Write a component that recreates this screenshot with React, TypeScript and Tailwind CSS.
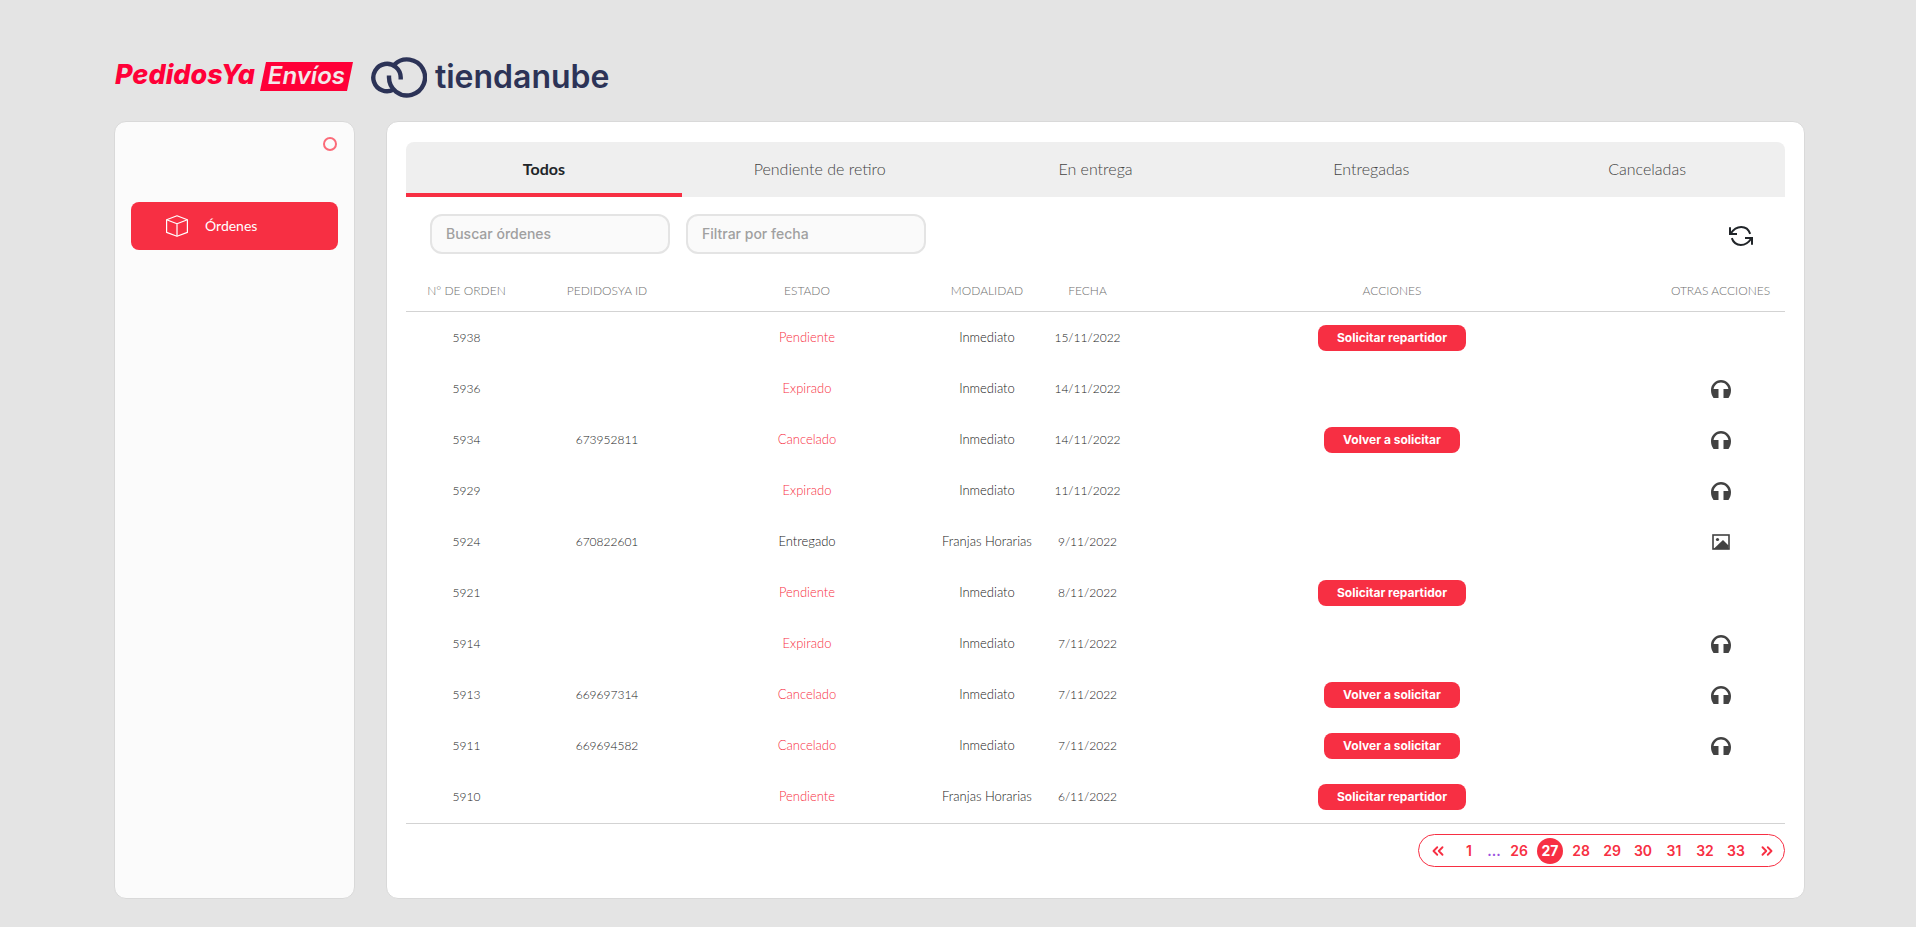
import { useState } from 'react'
import { ChevronsLeft, ChevronsRight } from 'lucide-react'

type Order = {
  id: string
  pedidosYaId?: string
  status: string
  mode: string
  date: string
  action?: string
  extra?: 'support' | 'image'
}

const TABS = ['Todos', 'Pendiente de retiro', 'En entrega', 'Entregadas', 'Canceladas']

const COLUMNS = [
  { label: 'N° DE ORDEN', width: 'w-[121px]' },
  { label: 'PEDIDOSYA ID', width: 'w-[160px]' },
  { label: 'ESTADO', width: 'w-[240px]' },
  { label: 'MODALIDAD', width: 'w-[120px]' },
  { label: 'FECHA', width: 'w-[81px]' },
  { label: 'ACCIONES', width: 'w-[528px]' },
  { label: 'OTRAS ACCIONES', width: 'w-[129px]' },
]

const ORDERS: Order[] = [
  { id: '5938', status: 'Pendiente', mode: 'Inmediato', date: '15/11/2022', action: 'Solicitar repartidor' },
  { id: '5936', status: 'Expirado', mode: 'Inmediato', date: '14/11/2022', extra: 'support' },
  { id: '5934', pedidosYaId: '673952811', status: 'Cancelado', mode: 'Inmediato', date: '14/11/2022', action: 'Volver a solicitar', extra: 'support' },
  { id: '5929', status: 'Expirado', mode: 'Inmediato', date: '11/11/2022', extra: 'support' },
  { id: '5924', pedidosYaId: '670822601', status: 'Entregado', mode: 'Franjas Horarias', date: '9/11/2022', extra: 'image' },
  { id: '5921', status: 'Pendiente', mode: 'Inmediato', date: '8/11/2022', action: 'Solicitar repartidor' },
  { id: '5914', status: 'Expirado', mode: 'Inmediato', date: '7/11/2022', extra: 'support' },
  { id: '5913', pedidosYaId: '669697314', status: 'Cancelado', mode: 'Inmediato', date: '7/11/2022', action: 'Volver a solicitar', extra: 'support' },
  { id: '5911', pedidosYaId: '669694582', status: 'Cancelado', mode: 'Inmediato', date: '7/11/2022', action: 'Volver a solicitar', extra: 'support' },
  { id: '5910', status: 'Pendiente', mode: 'Franjas Horarias', date: '6/11/2022', action: 'Solicitar repartidor' },
]

const PAGES = [26, 27, 28, 29, 30, 31, 32, 33]

function CloudMark() {
  return (
    <svg viewBox="0 0 56 42" className="w-14 h-[42px]" fill="none" stroke="#2c3357" strokeWidth="4.4">
      <path d="M29.7 22.5V20.5A13.7 13.7 0 1 0 22.5 32.6" />
      <path d="M18 18.5V20.5A18 18 0 1 0 23.5 7.5" />
    </svg>
  )
}

function BoxIcon() {
  return (
    <svg viewBox="0 0 22 22" className="w-[22px] h-[22px]" fill="none" stroke="currentColor" strokeWidth="1.2" strokeLinejoin="round">
      <path d="M11 .8 21.4 4.8V17.4L11 21.2.6 17.4V4.8z" />
      <path d="M.6 4.8 11 8.8 21.4 4.8M11 8.8V21.2" />
    </svg>
  )
}

function RefreshIcon() {
  return (
    <svg viewBox="0 0 24 20" className="w-6 h-5" fill="none" stroke="currentColor" strokeWidth="2">
      <path d="M1 1.3V8H8" />
      <path d="M1.5 7.8C5 2.5 8.5 1 12.2 1 16.5 1 19.8 3.8 21.2 7.8" />
      <path d="M23 18.7V12H16" />
      <path d="M22.5 12.2C19 17.5 15.5 19 11.8 19 7.5 19 4.2 16.2 2.8 12.2" />
    </svg>
  )
}

function HeadphonesIcon() {
  return (
    <svg viewBox="0 0 20 18" className="w-5 h-[18px]" fill="currentColor">
      <path d="M10 0C4.5 0 0 4.5 0 10c0 3 .8 5.5 2.5 8H7.5V9H2.6C3.2 5.3 6 2.4 10 2.4S16.8 5.3 17.4 9H12.5v9h5C19.2 15.5 20 13 20 10 20 4.5 15.5 0 10 0z" />
    </svg>
  )
}

function ImageIcon() {
  return (
    <svg viewBox="0 0 18 16" className="w-[18px] h-4">
      <rect x="1" y="1" width="16" height="14" fill="none" stroke="currentColor" strokeWidth="1.6" />
      <circle cx="5.5" cy="5.5" r="1.6" fill="currentColor" />
      <path d="M1.5 15 11 6 16.5 11.5V15z" fill="currentColor" />
    </svg>
  )
}

export default function App() {
  const [tab, setTab] = useState('Todos')
  const [page, setPage] = useState(27)

  return (
    <div className="min-h-screen bg-[#e4e4e4] pl-[114px] pr-[111px] pt-[57px] pb-7 font-['Lato',sans-serif] text-[#212529] flex flex-col">
      <header className="flex items-start gap-[18px] h-16 pl-px font-['Inter',sans-serif]">
        <div className="flex items-center gap-[5px] pt-1">
          <span className="font-extrabold italic text-[27px] leading-7 pb-0.5 text-[#ff0038]">PedidosYa</span>
          <span className="relative h-[29px] w-[93px] text-center">
            <svg viewBox="0 0 93 29" preserveAspectRatio="none" className="absolute inset-0 w-full h-full" fill="#ff0038">
              <path d="M6 0H93L87 29H0z" />
            </svg>
            <span className="relative font-semibold italic text-2xl leading-7 text-[#f3e8ea]">Envíos</span>
          </span>
        </div>
        <div className="flex items-center gap-2">
          <CloudMark />
          <span className="font-semibold text-[32px] leading-10 pb-0.5 text-[#2c3357]">tiendanube</span>
        </div>
      </header>

      <div className="flex flex-1 gap-[31px]">
        <aside className="w-[241px] shrink-0 rounded-xl border border-[#d9d9d9] bg-[#fbfbfb] px-4 pt-[15px]">
          <div className="flex justify-end pr-px">
            <span className="w-[14px] h-[14px] rounded-full border-2 border-[#fb6b79]" />
          </div>
          <nav className="pt-[51px]">
            <a href="#ordenes" className="flex items-center gap-[17px] h-12 px-[35px] rounded-lg bg-[#f72f43] text-white text-sm">
              <BoxIcon />
              Órdenes
            </a>
          </nav>
        </aside>

        <main className="flex-1 min-w-0 rounded-xl border border-[#d9d9d9] bg-white px-[19px] pt-5">
          {/* Tabs */}
          <div className="flex h-[55px] rounded-t-lg overflow-hidden bg-[#efefef]">
            {TABS.map((label) => (
              <button
                key={label}
                onClick={() => setTab(label)}
                className={`flex-1 border-b-4 pt-0.5 text-base ${
                  tab === label ? 'border-[#f72f43] font-bold' : 'border-transparent font-light text-[#444]'
                }`}
              >
                {label}
              </button>
            ))}
          </div>

          {/* Filters */}
          <div className="flex items-center gap-4 pt-[17px] pl-6 pr-8">
            <input
              aria-label="Buscar órdenes"
              placeholder="Buscar órdenes"
              className="w-60 h-10 px-[14px] pb-0.5 rounded-xl border-2 border-[#e4e4e4] bg-[#fafafa] font-['Inter',sans-serif] text-sm font-medium placeholder:text-[#a0a0a0]"
            />
            <input
              aria-label="Filtrar por fecha"
              placeholder="Filtrar por fecha"
              className="w-60 h-10 px-[14px] pb-0.5 rounded-xl border-2 border-[#e4e4e4] bg-[#fafafa] font-['Inter',sans-serif] text-sm font-medium placeholder:text-[#a0a0a0]"
            />
            <button aria-label="Actualizar" className="ml-auto pt-1">
              <RefreshIcon />
            </button>
          </div>

          {/* Orders */}
          <table className="mt-3 w-full table-fixed border-separate border-spacing-0 text-center text-xs">
            <thead>
              <tr className="h-[46px] text-[#6f6f6f]">
                {COLUMNS.map((col) => (
                  <th key={col.label} className={`${col.width} p-0 pt-1 border-b border-[#d3d3d3] font-light whitespace-nowrap`}>
                    {col.label}
                  </th>
                ))}
              </tr>
            </thead>
            <tbody className="font-light text-[#222]">
              {ORDERS.map((order) => (
                <tr key={order.id} className="h-[51px] *:p-0">
                  <td>{order.id}</td>
                  <td>{order.pedidosYaId}</td>
                  <td className={`text-[13px] ${order.status === 'Entregado' ? '' : 'text-[#f72f43]'}`}>{order.status}</td>
                  <td className="text-[13px] whitespace-nowrap">{order.mode}</td>
                  <td>{order.date}</td>
                  <td>
                    {order.action && (
                      <button className="h-[26px] px-[19px] rounded-lg bg-[#f72f43] font-['Inter',sans-serif] font-bold text-white">
                        {order.action}
                      </button>
                    )}
                  </td>
                  <td>
                    {order.extra && (
                      <button aria-label={order.extra === 'support' ? 'Soporte' : 'Ver imagen'} className="align-middle text-[#424242]">
                        {order.extra === 'support' ? <HeadphonesIcon /> : <ImageIcon />}
                      </button>
                    )}
                  </td>
                </tr>
              ))}
            </tbody>
          </table>

          {/* Pagination */}
          <div className="flex justify-end mt-px pt-[10px] border-t border-[#d3d3d3]">
            <nav className="flex items-center gap-[5px] h-[33px] pl-[6px] pr-1 rounded-full border border-[#f72f43] font-['Inter',sans-serif] text-sm font-semibold text-[#f72f43]">
              <button aria-label="Anterior" className="w-[26px] flex justify-center">
                <ChevronsLeft className="w-[18px] h-[18px]" strokeWidth={2.5} />
              </button>
              <button className="w-[26px]" onClick={() => setPage(1)}>1</button>
              <span className="w-[14px] text-center text-[#9b51e0]">...</span>
              {PAGES.map((n) => (
                <button
                  key={n}
                  onClick={() => setPage(n)}
                  className={`w-[26px] h-[26px] rounded-full ${page === n ? 'bg-[#f72f43] text-white font-bold' : ''}`}
                >
                  {n}
                </button>
              ))}
              <button aria-label="Siguiente" className="w-[26px] flex justify-center">
                <ChevronsRight className="w-[18px] h-[18px]" strokeWidth={2.5} />
              </button>
            </nav>
          </div>
        </main>
      </div>
    </div>
  )
}
